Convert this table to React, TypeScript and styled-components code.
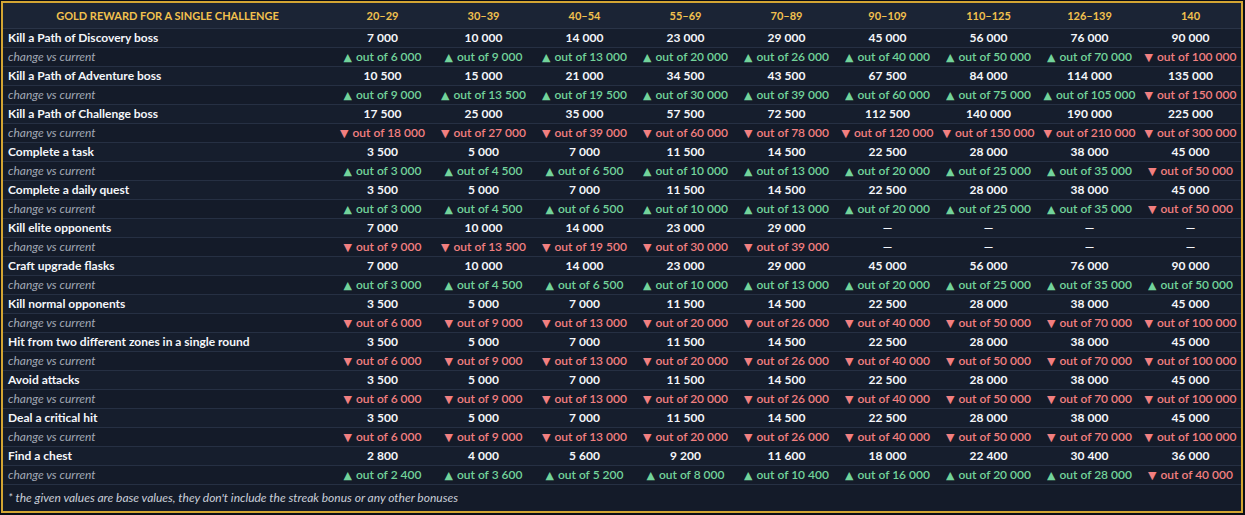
import React from "react";
import styled, { createGlobalStyle } from "styled-components";

const Global = createGlobalStyle`
  html, body { margin: 0; padding: 0; background: #0a0e16; }
  body { font-family: Lato, "Noto Sans", "Liberation Sans", sans-serif; }
`;

const Frame = styled.div`
  margin: 1px;
  width: 1242px;
  height: 512px;
  box-sizing: border-box;
  border: 2px solid #d3a533;
  background: #141b29;
  overflow: hidden;
`;

const Table = styled.table`
  width: 100%;
  table-layout: fixed;
  border-collapse: collapse;
`;

const HeadRow = styled.tr`
  background: #1b2435;
  height: 25px;
`;

const HeadCell = styled.th`
  color: #f2c14e;
  font-size: 11px;
  font-weight: 700;
  text-align: center;
  padding: 0 4px;
  border-bottom: 1px solid #2a3447;
`;

const BodyRow = styled.tr<{ $sub?: boolean }>`
  height: 19px;
  background: ${(p) => (p.$sub ? "#141b29" : "#161e2d")};
`;

const LabelCell = styled.td<{ $sub?: boolean }>`
  padding: 0 5px;
  height: 18px;
  font-size: 12px;
  line-height: 18px;
  white-space: nowrap;
  border-bottom: 1px solid #263043;
  color: ${(p) => (p.$sub ? "#a1a8b5" : "#f4f6fa")};
  font-weight: ${(p) => (p.$sub ? 400 : 700)};
  font-style: ${(p) => (p.$sub ? "italic" : "normal")};
`;

const ValueCell = styled.td`
  text-align: center;
  padding: 0 2px;
  font-size: 12px;
  line-height: 18px;
  font-weight: 700;
  color: #f4f6fa;
  white-space: nowrap;
  border-bottom: 1px solid #263043;
`;

const ChangeCell = styled.td<{ $trend: "up" | "down" | "none" }>`
  text-align: center;
  padding: 0 2px;
  font-size: 12px;
  line-height: 18px;
  font-weight: 600;
  white-space: nowrap;
  border-bottom: 1px solid #263043;
  color: ${(p) =>
    p.$trend === "up" ? "#72d39b" : p.$trend === "down" ? "#f27f80" : "#f4f6fa"};
`;

const Arrow = styled.span`
  font-family: "DejaVu Sans", sans-serif;
  font-size: 11px;
  line-height: 0;
  margin-right: 1px;
`;

const NoteCell = styled.td`
  height: 25px;
  padding: 0 5px;
  font-size: 12px;
  font-style: italic;
  color: #c9ced8;
  white-space: nowrap;
`;

const brackets = ["20–29", "30–39", "40–54", "55–69", "70–89", "90–109", "110–125", "126–139", "140"];

type Change = number | null;
type Challenge = { name: string; values: (number | null)[]; changes: Change[] };

const std = [3500, 5000, 7000, 11500, 14500, 22500, 28000, 38000, 45000];
const down1 = [-6000, -9000, -13000, -20000, -26000, -40000, -50000, -70000, -100000];
const taskCh = [3000, 4500, 6500, 10000, 13000, 20000, 25000, 35000, -50000];

const data: Challenge[] = [
  {
    name: "Kill a Path of Discovery boss",
    values: [7000, 10000, 14000, 23000, 29000, 45000, 56000, 76000, 90000],
    changes: [6000, 9000, 13000, 20000, 26000, 40000, 50000, 70000, -100000],
  },
  {
    name: "Kill a Path of Adventure boss",
    values: [10500, 15000, 21000, 34500, 43500, 67500, 84000, 114000, 135000],
    changes: [9000, 13500, 19500, 30000, 39000, 60000, 75000, 105000, -150000],
  },
  {
    name: "Kill a Path of Challenge boss",
    values: [17500, 25000, 35000, 57500, 72500, 112500, 140000, 190000, 225000],
    changes: [-18000, -27000, -39000, -60000, -78000, -120000, -150000, -210000, -300000],
  },
  { name: "Complete a task", values: std, changes: taskCh },
  { name: "Complete a daily quest", values: std, changes: taskCh },
  {
    name: "Kill elite opponents",
    values: [7000, 10000, 14000, 23000, 29000, null, null, null, null],
    changes: [-9000, -13500, -19500, -30000, -39000, null, null, null, null],
  },
  {
    name: "Craft upgrade flasks",
    values: [7000, 10000, 14000, 23000, 29000, 45000, 56000, 76000, 90000],
    changes: [3000, 4500, 6500, 10000, 13000, 20000, 25000, 35000, 50000],
  },
  { name: "Kill normal opponents", values: std, changes: down1 },
  { name: "Hit from two different zones in a single round", values: std, changes: down1 },
  { name: "Avoid attacks", values: std, changes: down1 },
  { name: "Deal a critical hit", values: std, changes: down1 },
  {
    name: "Find a chest",
    values: [2800, 4000, 5600, 9200, 11600, 18000, 22400, 30400, 36000],
    changes: [2400, 3600, 5200, 8000, 10400, 16000, 20000, 28000, -40000],
  },
];

const fmt = (n: number) =>
  String(Math.abs(n)).replace(/\B(?=(\d{3})+(?!\d))/g, "\u202f");

export default function App() {
  return (
    <>
      <Global />
      <Frame>
        <Table>
          <colgroup>
            <col style={{ width: 329 }} />
            {brackets.map((b) => (
              <col key={b} />
            ))}
          </colgroup>
          <thead>
            <HeadRow>
              <HeadCell>GOLD REWARD FOR A SINGLE CHALLENGE</HeadCell>
              {brackets.map((b) => (
                <HeadCell key={b}>{b}</HeadCell>
              ))}
            </HeadRow>
          </thead>
          <tbody>
            {data.map((row) => (
              <React.Fragment key={row.name}>
                <BodyRow>
                  <LabelCell>{row.name}</LabelCell>
                  {row.values.map((v, i) => (
                    <ValueCell key={i}>{v === null ? "—" : fmt(v)}</ValueCell>
                  ))}
                </BodyRow>
                <BodyRow $sub>
                  <LabelCell $sub>change vs current</LabelCell>
                  {row.changes.map((c, i) =>
                    c === null ? (
                      <ChangeCell key={i} $trend="none">—</ChangeCell>
                    ) : (
                      <ChangeCell key={i} $trend={c > 0 ? "up" : "down"}>
                        <Arrow>{c > 0 ? "▲" : "▼"}</Arrow> out of {fmt(c)}
                      </ChangeCell>
                    )
                  )}
                </BodyRow>
              </React.Fragment>
            ))}
            <tr>
              <NoteCell colSpan={10}>
                * the given values are base values, they don't include the streak bonus or any other bonuses
              </NoteCell>
            </tr>
          </tbody>
        </Table>
      </Frame>
    </>
  );
}
